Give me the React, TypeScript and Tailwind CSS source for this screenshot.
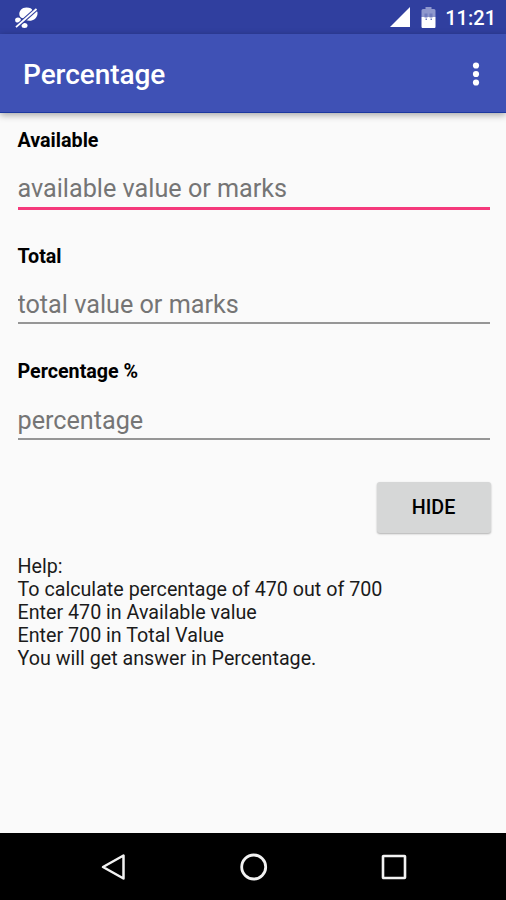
import { useState } from "react";

const fields = [
  { id: "available", label: "Available", hint: "available value or marks" },
  { id: "total", label: "Total", hint: "total value or marks" },
  { id: "percentage", label: "Percentage %", hint: "percentage" },
];

export default function App() {
  const [values, setValues] = useState<Record<string, string>>({});
  const [active, setActive] = useState("available");

  return (
    <div className="flex h-[900px] w-[506px] flex-col overflow-hidden bg-[#fafafa] font-['Roboto',sans-serif] text-black">
      {/* STATUS BAR */}
      <div className="flex h-[34px] shrink-0 items-center bg-[#303f9f] pr-[10px] pl-[14px] text-white">
        <svg width="26" height="24" viewBox="0 0 26 24" className="mt-px">
          <path d="M5.500 9.500C4.500 5 8 1.500 12.500 1.500 16 1.500 18 2.500 18.500 4.500 21.500 3 24 4.500 23.500 8c-.5 4-4 6.800-8 6.800-3 0-4-1-5-2.300C8 12.500 6 11.500 5.500 9.500Z" fill="#fff" />
          <ellipse cx="4" cy="14" rx="2.900" ry="2.600" fill="#fff" />
          <ellipse cx="10.500" cy="19.500" rx="3" ry="2.500" fill="#fff" />
          <path d="M2 21.200 22.500 3" stroke="#303f9f" strokeWidth="4" />
          <path d="M2 21.200 22.500 3" stroke="#fff" strokeWidth="1.800" />
        </svg>
        <svg width="20" height="20" viewBox="0 0 20 20" className="ml-auto">
          <path d="M0 20 20 0v20Z" fill="#fff" />
        </svg>
        <svg width="15" height="21" viewBox="0 0 15 21" className="ml-[11px]">
          <path d="M4.500 0h6v2H12.500c1 0 2 .5 2 1.500V10H.5V3.500C.5 2.500 1.500 2 2.500 2h2Z" fill="#8f98cd" />
          <path d="M.5 10h14v9.500c0 1-.5 1.500-1.500 1.500H2c-1 0-1.500-.5-1.500-1.500Z" fill="#fff" />
          <path d="M3.500 6.500h3v4h-3ZM8.500 6.500h3v4h-3ZM4.500 11.500h1.500v1.500H4.500ZM9.500 11.500H11v1.500H9.500Z" fill="#707bbd" />
        </svg>
        <span className="mt-[2px] ml-[9px] text-[20px] leading-none font-medium">11:21</span>
      </div>

      {/* APP BAR */}
      <header className="z-10 flex h-[79px] shrink-0 items-center justify-between border-b border-[#1c389f] bg-[#3f51b5] pr-[24px] pl-[23px] text-white shadow-[0_2px_7px_rgba(0,0,0,0.35)]">
        <h1 className="mt-[4px] text-[28px] leading-none font-medium tracking-[-0.050px]">Percentage</h1>
        <button aria-label="More options" className="mt-px">
          <svg width="12" height="24" viewBox="0 0 12 24" fill="#fff">
            <circle cx="6" cy="3.500" r="3.100" />
            <circle cx="6" cy="12" r="3.100" />
            <circle cx="6" cy="20.500" r="3.100" />
          </svg>
        </button>
      </header>

      {/* FORM */}
      <main className="flex-1 px-[17.500px] pt-[16px]">
        {fields.map((field) => (
          <div key={field.id} className="h-[115.700px]">
            <label htmlFor={field.id} className="block text-[19.700px] leading-[24px] font-bold">
              {field.label}
            </label>
            <input
              id={field.id}
              type="text"
              placeholder={field.hint}
              value={values[field.id] ?? ""}
              onFocus={() => setActive(field.id)}
              onChange={(e) => setValues({ ...values, [field.id]: e.target.value })}
              className={`mt-[17px] block w-[472px] text-[25.200px] outline-none placeholder:text-[#757575] ${
                active === field.id
                  ? "h-[40px] border-b-3 border-[#f5397b]"
                  : "h-[38.300px] border-b-2 border-[#969696] pt-[2px]"
              }`}
            />
          </div>
        ))}

        <div className="mt-[6px] flex justify-end">
          <button className="mr-[-2px] h-[51px] w-[114px] rounded-[3px] bg-[#d6d7d7] pt-px text-[19.700px] font-medium shadow-[0_1px_2px_rgba(0,0,0,0.3)]">
            HIDE
          </button>
        </div>

        <div className="mt-[22px] text-[19.700px] leading-[23px] text-[#1b1b1b]">
          <p>Help:</p>
          <p>To calculate percentage of 470 out of 700</p>
          <p>Enter 470 in Available value</p>
          <p>Enter 700 in Total Value</p>
          <p>You will get answer in Percentage.</p>
        </div>
      </main>

      {/* NAVIGATION BAR */}
      <nav className="flex h-[67px] shrink-0 items-center justify-between bg-black pr-[97px] pl-[99px]">
        <button aria-label="Back">
          <svg width="30" height="30" viewBox="0 0 30 30" fill="none" stroke="#f2f2f2" strokeWidth="2.500">
            <path d="M24.500 3.500v23L4 15Z" strokeLinejoin="round" />
          </svg>
        </button>
        <button aria-label="Home">
          <svg width="30" height="30" viewBox="0 0 30 30" fill="none" stroke="#f2f2f2" strokeWidth="2.800">
            <circle cx="14.700" cy="15" r="12" />
          </svg>
        </button>
        <button aria-label="Recents">
          <svg width="30" height="30" viewBox="0 0 30 30" fill="none" stroke="#f2f2f2" strokeWidth="2.600">
            <rect x="4" y="4" width="22" height="22" rx="0.500" />
          </svg>
        </button>
      </nav>
    </div>
  );
}
